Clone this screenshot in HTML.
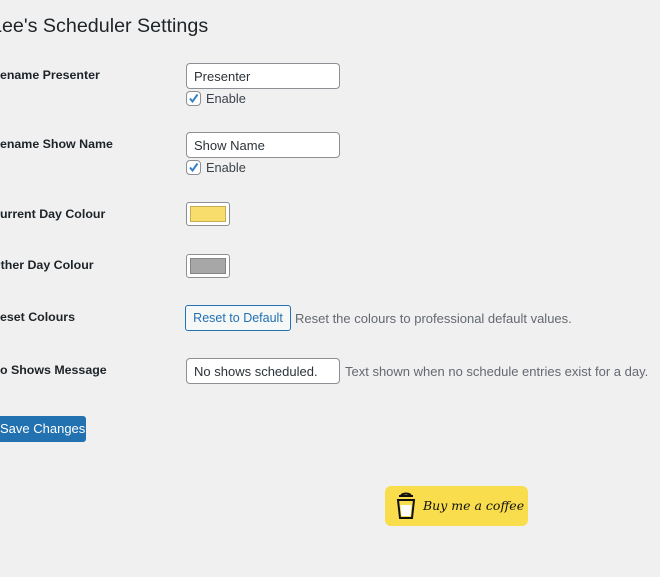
<!DOCTYPE html>
<html><head><meta charset="utf-8"><style>
*{box-sizing:border-box;margin:0;padding:0}
body{width:660px;height:577px;background:#f0f0f1;font-family:"Liberation Sans",sans-serif;font-size:12.8px;color:#1d2327;position:relative;overflow:hidden}
.a{position:absolute;white-space:nowrap}
h1{position:absolute;left:-9px;top:15px;font-size:19.7px;font-weight:400;color:#1d2327}
.l{font-weight:bold;font-size:12.4px;left:-9px}
.in{position:absolute;left:186px;width:154px;height:26px;background:#fff;border:1px solid #8c8f94;border-radius:4px;padding:0 7px;line-height:25px;font-size:13px;color:#2c3338}
.cb{position:absolute;left:186px;width:15px;height:15px;background:#fff;border:1px solid #8c8f94;border-radius:4px}
.en{left:206px;color:#3c434a}
.sw{position:absolute;left:186px;width:44px;height:24px;background:#fff;border:1px solid #8c8f94;border-radius:3px;padding:3px}
.sw div{width:100%;height:100%;border:1px solid rgba(0,0,0,.2)}
.d{color:#646970;font-size:13px}
</style></head><body>
<h1>Lee's Scheduler Settings</h1>
<div class="a l" style="top:68px">Rename Presenter</div>
<div class="in" style="top:63px">Presenter</div>
<div class="cb" style="top:91px"><svg width="13" height="13" viewBox="0 0 13 13"><path d="M3 6.5l2.5 3L10.5 2.5" fill="none" stroke="#3582c4" stroke-width="2"/></svg></div>
<div class="a en" style="top:91px">Enable</div>

<div class="a l" style="top:137px">Rename Show Name</div>
<div class="in" style="top:132px">Show Name</div>
<div class="cb" style="top:160px"><svg width="13" height="13" viewBox="0 0 13 13"><path d="M3 6.5l2.5 3L10.5 2.5" fill="none" stroke="#3582c4" stroke-width="2"/></svg></div>
<div class="a en" style="top:160px">Enable</div>

<div class="a l" style="top:207px">Current Day Colour</div>
<div class="sw" style="top:202px"><div style="background:#f8dc6c"></div></div>

<div class="a l" style="top:258px">Other Day Colour</div>
<div class="sw" style="top:254px"><div style="background:#a7a7a7"></div></div>

<div class="a l" style="top:310px">Reset Colours</div>
<div class="a" style="left:185px;top:305px;width:106px;height:26px;border:1px solid #2271b1;border-radius:3px;background:#f6f7f7;color:#2271b1;text-align:center;line-height:25px;font-size:12.5px">Reset to Default</div>
<div class="a d" style="left:295px;top:311px">Reset the colours to professional default values.</div>

<div class="a l" style="top:363px">No Shows Message</div>
<div class="in" style="top:358px">No shows scheduled.</div>
<div class="a d" style="left:345px;top:364px">Text shown when no schedule entries exist for a day.</div>

<div class="a" style="left:-10px;top:416px;width:96px;height:26px;background:#2271b1;border-radius:3px;color:#fff;line-height:26px;padding-left:10px;font-size:13px">Save Changes</div>

<div class="a" style="left:385px;top:486px;width:143px;height:40px;background:#f9dd4c;border-radius:6px">
<svg class="a" style="left:11px;top:6px" width="20" height="28" viewBox="0 0 20 28"><path d="M3 4h14M2 8h16l-2 18H4z" fill="none" stroke="#111" stroke-width="2"/><path d="M5 3q5-3 10 0" fill="none" stroke="#111" stroke-width="2"/><path d="M4.5 13h11l-1 11h-9z" fill="#fff"/></svg>
<div class="a" style="left:38px;top:12px;font-family:'DejaVu Serif',serif;font-style:italic;font-size:12.5px;color:#111">Buy me a coffee</div>
</div>
</body></html>
